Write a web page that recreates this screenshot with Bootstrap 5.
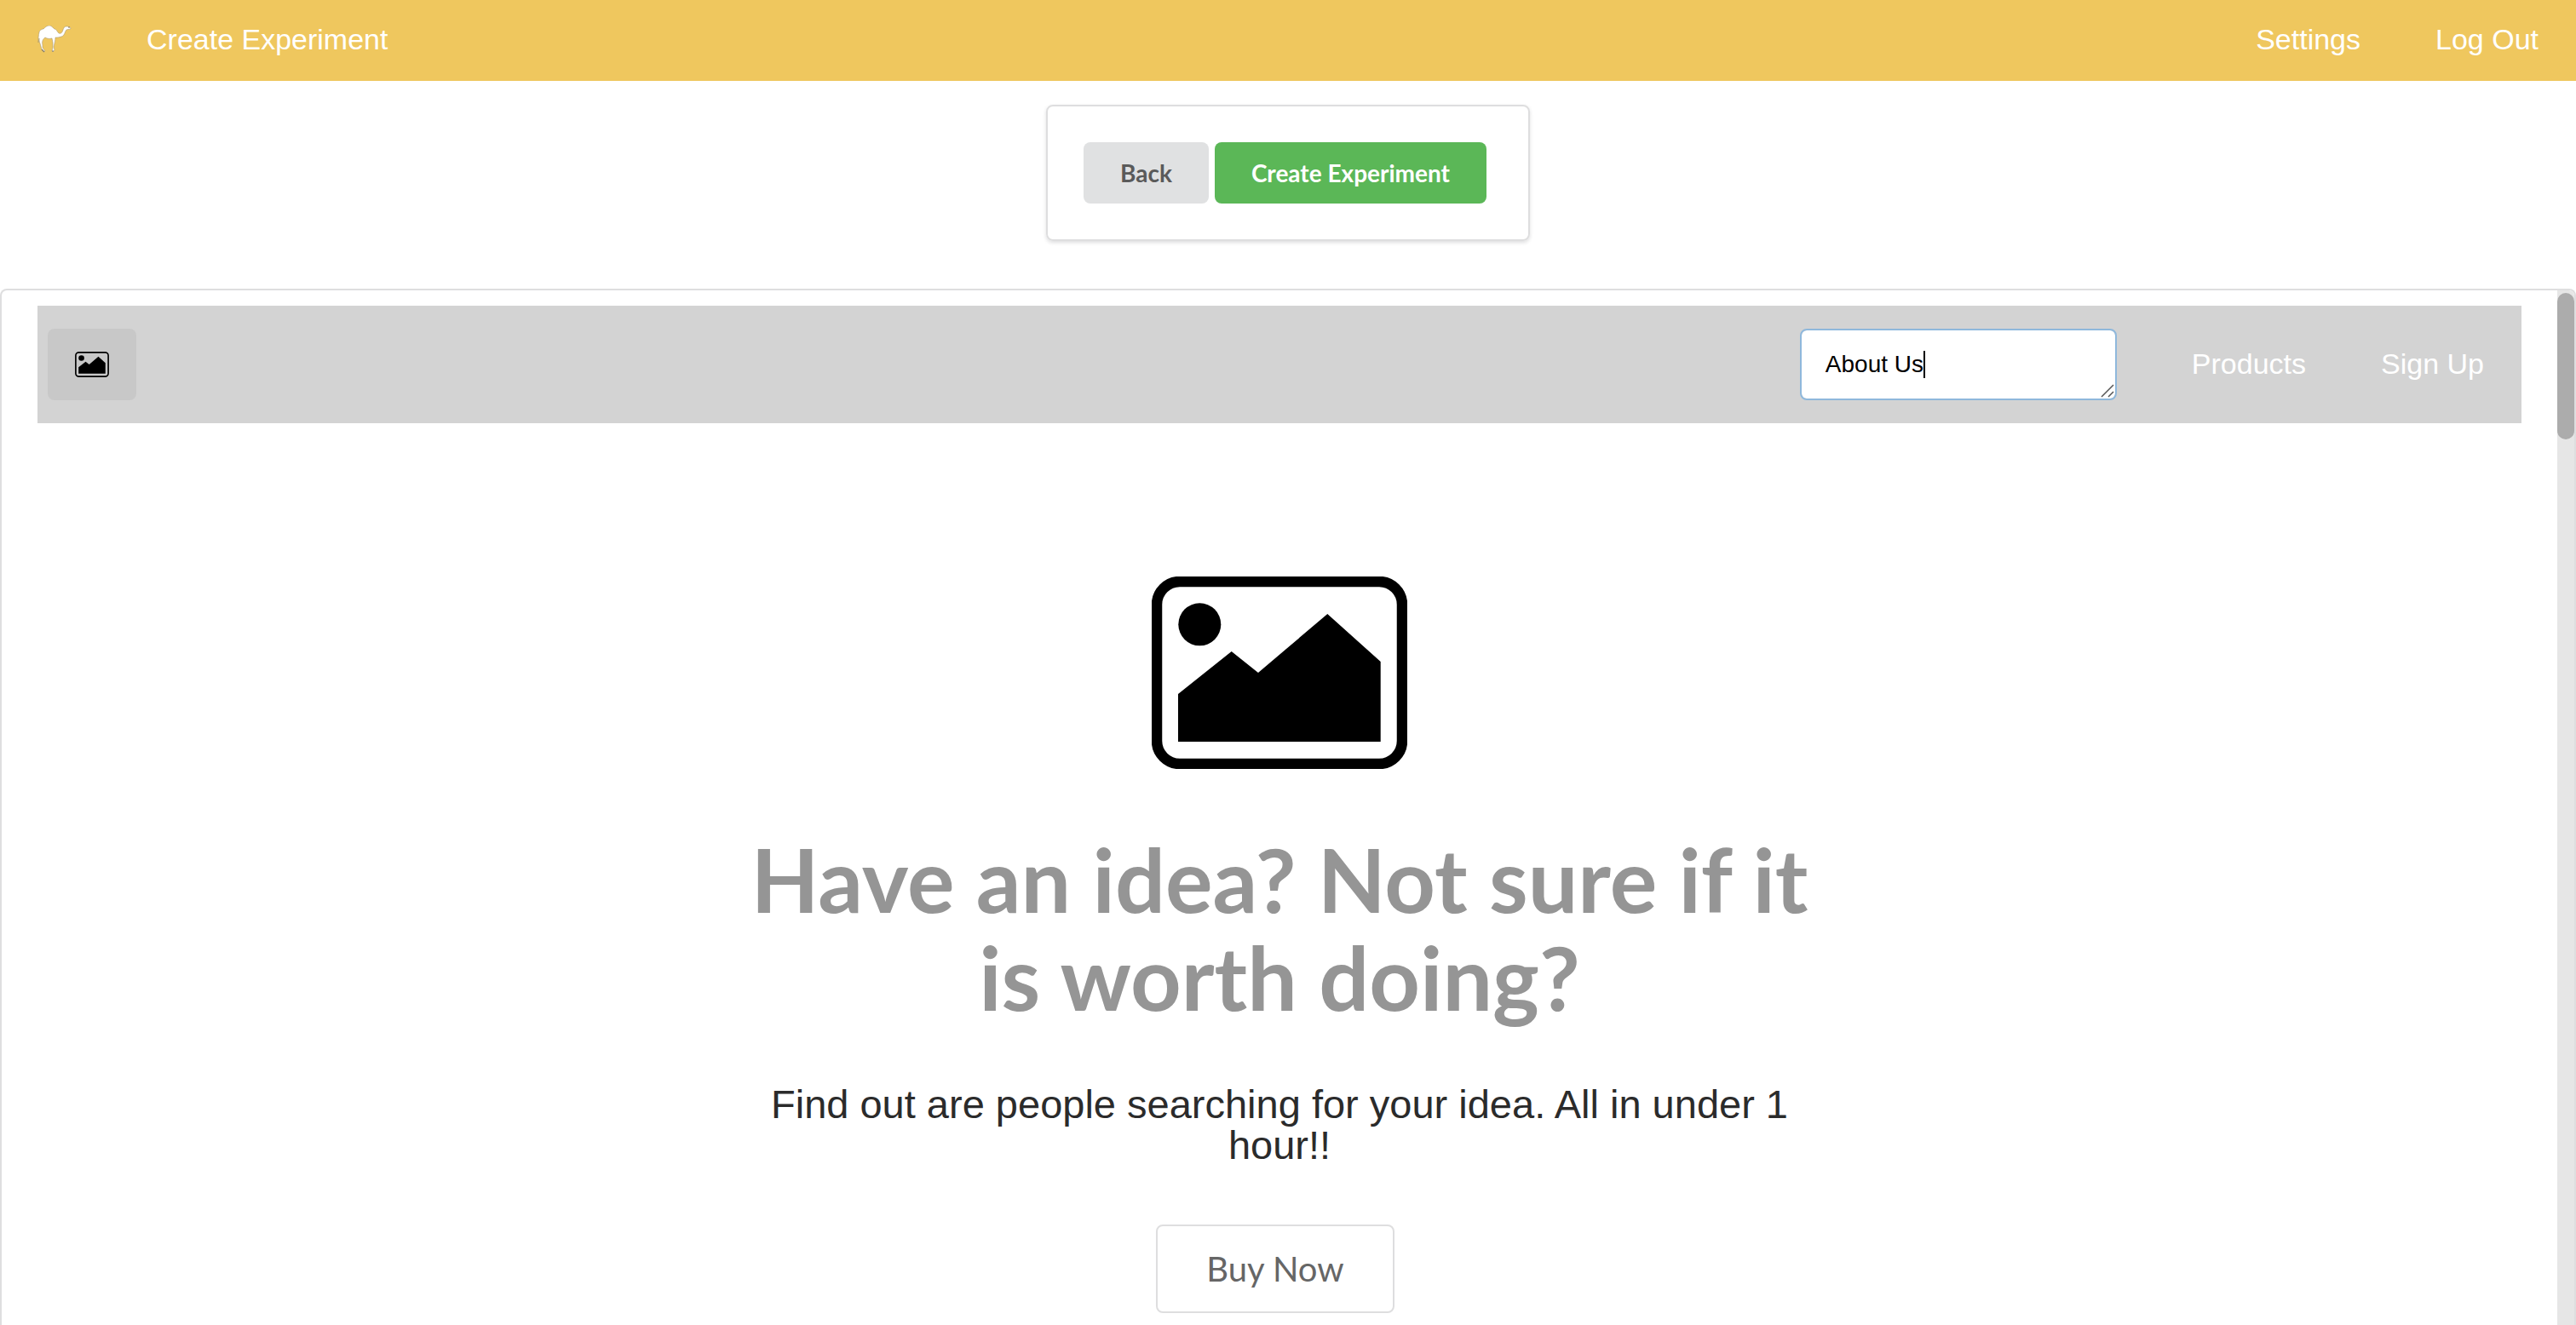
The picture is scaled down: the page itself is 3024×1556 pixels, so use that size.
<!DOCTYPE html>
<html lang="en">
<head>
<meta charset="utf-8">
<meta name="viewport" content="width=device-width, initial-scale=1">
<title>Create Experiment</title>
<link href="https://cdn.jsdelivr.net/npm/bootstrap@5.3.0/dist/css/bootstrap.min.css" rel="stylesheet">
<style>
  body { font-family: "Liberation Sans", Arial, sans-serif; background: #fff; }
  .site-bar { background: #efc75e; height: 95px; font-size: 34px; }
  .bar-link { color: #fff; text-decoration: none; padding: 0 44px 3px; line-height: 40px; }
  .bar-link:hover { color: #fff; }
  .bar-link svg { display: block; }
  .actions-card { border: 2px solid #dededf; border-radius: 8px; padding: 42px 49px 42px 42px; gap: 7px; margin: 28px 0 56px; box-shadow: 0 2px 4px rgba(34,36,38,.15); }
  .act-btn { font-family: Lato, sans-serif; font-weight: 700; font-size: 28px; line-height: 28px; padding: 22px 43px; border: 0; border-radius: 8px; }
  .act-back, .act-back:hover { background: #e0e1e2; color: #5a5a5a; }
  .act-create, .act-create:hover { background: #5bb757; color: #fff; }
  .preview { border: 2px solid #dededf; border-bottom: 0; border-radius: 8px 8px 0 0; min-height: 0; }
  .preview-page { padding: 18px 42px 0; min-width: 0; }
  .preview-bar { background: #d3d3d3; height: 138px; font-size: 34px; padding-left: 12px; }
  .logo-btn { background: #c8c8c8; border: 0; border-radius: 8px; padding: 27px 32px; }
  .logo-btn svg { display: block; }
  .name-edit { width: 372px; height: 84px; margin-right: 44px; }
  .name-edit textarea { height: 100%; font-size: 28px; line-height: 36px; padding: 22px 28px; border: 2px solid #8fb8dc; border-radius: 8px; color: #000; resize: none; overflow: hidden; }
  .name-edit .caret-mark { left: 145px; top: 26px; width: 2px; height: 32px; background: #000; }
  .name-edit .grip { right: 3px; bottom: 3px; }
  .hero { width: 1264px; max-width: 100%; padding-top: 180px; }
  .hero-title { font-family: Lato, sans-serif; font-weight: 700; font-size: 104px; line-height: 115px; color: #959595; margin: 71px 0 0; }
  .hero-text { font-size: 47px; line-height: 48px; color: #2b2b2b; margin: 69px 0 0; }
  .buy-btn { font-family: Lato, sans-serif; font-size: 40px; line-height: 40px; color: #666; background: #fff; border: 2px solid #dededf; border-radius: 8px; padding: 30px 57px; margin: 69px 10px 0 0; }
  .scroll-track { width: 20px; background: #e6e6e6; padding-top: 3px; border-top-right-radius: 6px; }
  .scroll-thumb { height: 172px; border-radius: 10px; background: #acacac; }
</style>
<script src="https://cdn.jsdelivr.net/npm/bootstrap@5.3.0/dist/js/bootstrap.bundle.min.js"></script>
</head>
<body class="vh-100 d-flex flex-column overflow-hidden">
<svg width="0" height="0" class="position-absolute" aria-hidden="true">
  <symbol id="picture" viewBox="0 0 300 226">
    <rect x="6" y="6" width="288" height="214" rx="27" fill="none" stroke="#000" stroke-width="12.5"/>
    <circle cx="56.300" cy="56.300" r="25"/>
    <path d="M31 138 93.700 88 125 113 206.300 44 268.700 100V194H31z"/>
  </symbol>
</svg>
<nav class="site-bar d-flex align-items-center flex-shrink-0">
  <a class="bar-link" href="#" aria-label="Home">
    <svg width="40" height="32" viewBox="-1 0 40 32"><path d="M1 8C1 6 4 4 6 4 8 2 10 0 13 0 16 0 17 3 19 4 21 4 22 7 24 9 27 10 28 8 29 5 30 2 31 1 33 1 35 1 38 2 38 3 38 5 35 4 33 5 31 7 31 12 27 13 24 14 22 14 20 14 20 17 19 21 18 25L19 29 17 31 16 30 17 26 17 20 16 15C12 16 10 15 8 14 5 16 4 19 5 23L5 26 8 30 6 31 4 28 2 21C1 19 1 17 1 15L0 20C0 16 0 11 1 8Z" fill="#fff" stroke="#9c8d66" stroke-width=".5"/><path d="M35 2l2 0M4 28l3 3M16 30l2 0" stroke="#877b5c" stroke-width="1.200" fill="none"/></svg>
  </a>
  <a class="bar-link" href="#">Create Experiment</a>
  <a class="bar-link ms-auto" href="#">Settings</a>
  <a class="bar-link" href="#">Log Out</a>
</nav>
<section class="actions-card d-flex align-self-center flex-shrink-0">
  <button type="button" class="btn act-btn act-back">Back</button>
  <button type="button" class="btn act-btn act-create">Create Experiment</button>
</section>
<main class="preview d-flex flex-grow-1 overflow-hidden">
  <div class="preview-page flex-grow-1">
    <header class="preview-bar d-flex align-items-center">
      <button type="button" class="logo-btn" aria-label="Choose logo"><svg width="40" height="30"><use href="#picture"/></svg></button>
      <div class="name-edit position-relative ms-auto">
        <textarea class="form-control" rows="1" aria-label="Link name">About Us</textarea>
        <span class="caret-mark position-absolute"></span>
        <svg class="grip position-absolute" width="16" height="16" viewBox="0 0 16 16"><path d="M1 15 15 1M9 15 15 9" stroke="#555" stroke-width="1.500"/></svg>
      </div>
      <a class="bar-link" href="#">Products</a>
      <a class="bar-link" href="#">Sign Up</a>
    </header>
    <section class="hero mx-auto text-center d-flex flex-column align-items-center">
      <svg width="300" height="226" role="img" aria-label="Picture"><use href="#picture"/></svg>
      <h1 class="hero-title">Have an idea? Not sure if it is worth doing?</h1>
      <p class="hero-text">Find out are people searching for your idea. All in under 1 hour!!</p>
      <button type="button" class="btn buy-btn">Buy Now</button>
    </section>
  </div>
  <div class="scroll-track flex-shrink-0"><div class="scroll-thumb"></div></div>
</main>
</body>
</html>
